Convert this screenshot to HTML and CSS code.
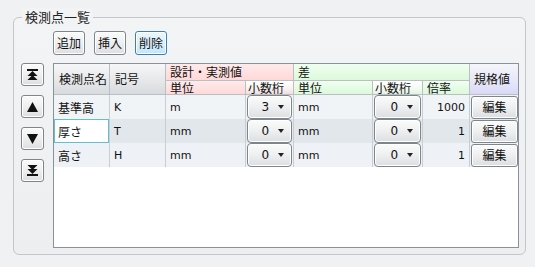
FILE: index.html
```html
<!DOCTYPE html>
<html lang="ja">
<head>
  <meta charset="UTF-8" />
  <title>検測点一覧</title>
  <link rel="stylesheet" href="styles.css">
</head>
<body>

  <div class="group">
    <div class="group-title">検測点一覧</div>

    <div class="toolbar">
      <button class="btn">追加</button>
      <button class="btn">挿入</button>
      <button class="btn focused">削除</button>
    </div>

    <div class="main">
      <div class="side">
        <button class="btn side-btn" title="先頭へ">
          <svg width="11" height="11" viewBox="0 0 11 11"><rect x="0" y="0" width="11" height="2"/><path d="M5.5 2 L10.5 7 H0.5 Z"/><path d="M5.5 6 L10.5 11 H0.5 Z"/></svg>
        </button>
        <button class="btn side-btn" title="上へ">
          <svg width="11" height="10" viewBox="0 0 11 10"><path d="M5.5 0 L11 10 H0 Z"/></svg>
        </button>
        <button class="btn side-btn" title="下へ">
          <svg width="11" height="10" viewBox="0 0 11 10"><path d="M0 0 H11 L5.5 10 Z"/></svg>
        </button>
        <button class="btn side-btn" title="末尾へ">
          <svg width="11" height="11" viewBox="0 0 11 11"><path d="M0.5 0 H10.5 L5.5 5 Z"/><path d="M0.5 4 H10.5 L5.5 9 Z"/><rect x="0" y="9" width="11" height="2"/></svg>
        </button>
      </div>

      <div class="grid">
        <table>
          <colgroup>
            <col style="width:56px"><col style="width:56px"><col style="width:80px"><col style="width:48px">
            <col style="width:79px"><col style="width:50px"><col style="width:47px"><col style="width:48px">
          </colgroup>
          <thead>
            <tr class="h1">
              <th rowspan="2" class="hd-plain">検測点名</th>
              <th rowspan="2" class="hd-plain">記号</th>
              <th colspan="2" class="hd-design">設計・実測値</th>
              <th colspan="3" class="hd-diff">差</th>
              <th rowspan="2" class="hd-spec">規格値</th>
            </tr>
            <tr class="h2">
              <th class="hd-design">単位</th>
              <th class="hd-design-sub">小数桁</th>
              <th class="hd-diff">単位</th>
              <th class="hd-diff-sub">小数桁</th>
              <th class="hd-diff">倍率</th>
            </tr>
          </thead>
          <tbody id="rows"></tbody>
        </table>
      </div>
    </div>
  </div>

  <script>
    const points = [
      { name: '基準高', sym: 'K', unit: 'm', digits: 3, diffUnit: 'mm', diffDigits: 0, rate: 1000 },
      { name: '厚さ', sym: 'T', unit: 'mm', digits: 0, diffUnit: 'mm', diffDigits: 0, rate: 1 },
      { name: '高さ', sym: 'H', unit: 'mm', digits: 0, diffUnit: 'mm', diffDigits: 0, rate: 1 }
    ];
    const currentRow = 1;

    const rowsEl = document.getElementById('rows');

    function combo(v) {
      return `<div class="combo"><span>${v}</span><span class="arrow"></span></div>`;
    }

    points.forEach((p, i) => {
      const tr = document.createElement('tr');
      tr.className = 'row row-' + (i % 3);
      tr.innerHTML = `
        <td class="${i === currentRow ? 'current' : ''}">${p.name}</td>
        <td>${p.sym}</td>
        <td>${p.unit}</td>
        <td class="ctl">${combo(p.digits)}</td>
        <td>${p.diffUnit}</td>
        <td class="ctl">${combo(p.diffDigits)}</td>
        <td class="num">${p.rate}</td>
        <td class="ctl"><button class="btn edit-btn">編集</button></td>
      `;
      rowsEl.appendChild(tr);
    });
  </script>

</body>
</html>
```

FILE: styles.css
```css
body {
  margin: 0;
  background: #eff1f3;
  color: #111;
  font-family: "DejaVu Sans", "Noto Sans CJK JP", sans-serif;
  font-size: 11px;
  width: 535px;
  height: 267px;
  overflow: hidden;
}

.group {
  position: relative;
  margin: 17px 9px 0 13px;
  height: 238px;
  border: 1px solid #c3c7cb;
  border-radius: 6px;
  background: linear-gradient(#f3f4f6, #eceef0);
  box-sizing: border-box;
}

.group-title {
  position: absolute;
  top: -10px;
  left: 8px;
  padding: 0 3px;
  background: #f2f3f5;
  font-family: "Noto Sans CJK JP", sans-serif;
  font-size: 13px;
  line-height: 18px;
  color: #222;
}

.btn {
  font-family: "Noto Sans CJK JP", sans-serif;
  font-size: 12px;
  line-height: 14px;
  color: #111;
  background: linear-gradient(#fbfbfb 0%, #eeeff0 50%, #dcdee1 100%);
  border: 1px solid #7d858d;
  border-radius: 3px;
  padding: 0;
  cursor: pointer;
  box-shadow: inset 0 0 0 1px #ffffff;
}

.btn.focused {
  border-color: #3c7fb1;
  background: linear-gradient(#eaf6fd 0%, #d9f0fc 50%, #bee6fd 100%);
  box-shadow: inset 0 0 0 1px #ffffff;
}

.toolbar {
  display: flex;
  gap: 9px;
  padding: 13px 0 0 39px;
  height: 24px;
}

.toolbar .btn {
  width: 32px;
  height: 24px;
}

.main {
  display: flex;
  gap: 9px;
  padding: 8px 0 0 7px;
}

.side {
  display: flex;
  flex-direction: column;
  gap: 9px;
}

.side-btn {
  width: 23px;
  height: 23px;
  display: flex;
  align-items: center;
  justify-content: center;
}

.side-btn svg {
  fill: #111;
}

.grid {
  width: 466px;
  height: 185px;
  border: 1px solid #88929b;
  box-sizing: border-box;
  background: #fff;
  overflow: hidden;
}

table {
  border-collapse: separate;
  border-spacing: 0;
  table-layout: fixed;
  width: 464px;
}

th {
  font-family: "Noto Sans CJK JP", sans-serif;
  font-weight: normal;
  font-size: 12px;
  line-height: 12px;
  text-align: left;
  padding: 0 0 0 4px;
  border-right: 1px solid #babfc4;
  border-bottom: 1px solid #babfc4;
  color: #111;
  white-space: nowrap;
}

.h1 th { height: 16px; }
.h2 th { height: 13px; }

.hd-plain {
  background: linear-gradient(#f7f7f8, #e4e6e8 60%, #d8dbde);
  padding-left: 5px;
}

.hd-design {
  background: linear-gradient(#ffeaea, #ffd9d9);
}

.hd-design-sub {
  background: linear-gradient(#ffffff, #f9f1f1 60%, #f2dede);
  padding-left: 2px;
}

.hd-diff {
  background: linear-gradient(#efffee, #ddf8dc);
}

.hd-diff-sub {
  background: linear-gradient(#ffffff, #f3faf2 60%, #e2f4e0);
  padding-left: 2px;
}

.hd-spec {
  background: linear-gradient(#f5f5fb, #e6e6f8 60%, #d9d9f6);
  border-right: none;
}

td {
  height: 24px;
  padding: 0 0 0 4px;
  border-right: 1px solid #c9ced3;
  font-size: 11px;
  white-space: nowrap;
  overflow: hidden;
}

td:first-child {
  font-family: "Noto Sans CJK JP", sans-serif;
  font-size: 12px;
}

td:last-child {
  border-right: none;
}

.row-0 td { background: #f1f4f7; }
.row-1 td { background: #e2e7ec; }
.row-2 td { background: #eef1f5; }

.row td.current {
  background: #fff;
  box-shadow: inset 0 0 0 1px #63bfd0;
}

td.ctl {
  padding: 0;
}

td.num {
  text-align: right;
  padding: 0 4px 0 0;
}

.combo {
  height: 22px;
  margin: 0 1px 0 1px;
  border: 1px solid #7d858d;
  border-radius: 4px;
  background: linear-gradient(#fbfbfb 0%, #eeeff0 50%, #dcdee1 100%);
  box-shadow: inset 0 0 0 1px #ffffff;
  display: flex;
  align-items: center;
  justify-content: flex-end;
  gap: 9px;
  padding-right: 7px;
  font-size: 12px;
}

.arrow {
  width: 0;
  height: 0;
  border-left: 3.5px solid transparent;
  border-right: 3.5px solid transparent;
  border-top: 4px solid #222;
}

.edit-btn {
  width: 47px;
  height: 23px;
  margin-left: 1px;
  display: block;
}
```
